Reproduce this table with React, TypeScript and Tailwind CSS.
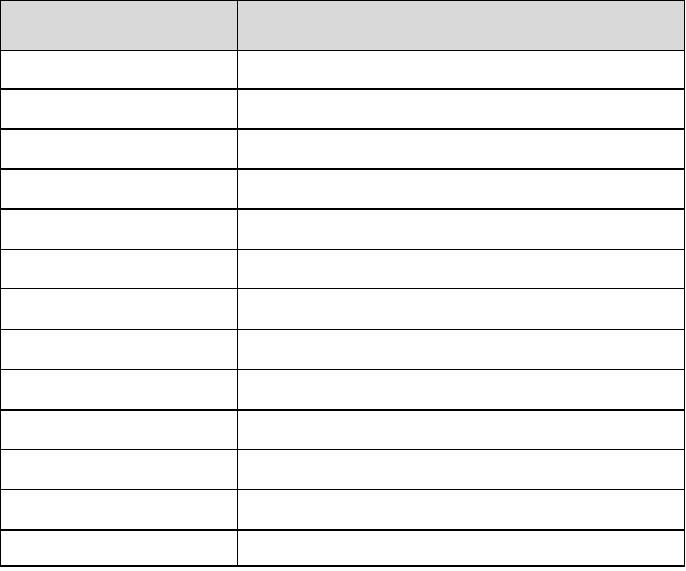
import React from "react";

const rows: { h: string; b: string }[] = [
  { h: "h-[37px]", b: "border-b-2" },
  { h: "h-[38px]", b: "border-b-2" },
  { h: "h-[38px]", b: "border-b-2" },
  { h: "h-[38px]", b: "border-b-2" },
  { h: "h-[39px]", b: "border-b" },
  { h: "h-[38px]", b: "border-b" },
  { h: "h-[40px]", b: "border-b" },
  { h: "h-[39px]", b: "border-b" },
  { h: "h-[39px]", b: "border-b-2" },
  { h: "h-[38px]", b: "border-b" },
  { h: "h-[39px]", b: "border-b" },
  { h: "h-[39px]", b: "border-b-2" },
  { h: "h-[34px]", b: "border-b-2" },
];

export default function App() {
  return (
    <div className="w-[686px] h-[571px] bg-white" style={{ fontFamily: '"Liberation Sans", Arial, sans-serif' }}>
      <div className="w-[685px] border-l border-r border-t border-black flex flex-col">
        <div className="flex h-[50px] bg-[#d9d9d9] border-b border-black">
          <div className="w-[237px] border-r border-black" />
          <div className="flex-1" />
        </div>
        {rows.map((r, i) => (
          <div key={i} className={`flex ${r.h} ${r.b} border-black box-content`}>
            <div className="w-[237px] border-r border-black" />
            <div className="flex-1" />
          </div>
        ))}
      </div>
    </div>
  );
}
